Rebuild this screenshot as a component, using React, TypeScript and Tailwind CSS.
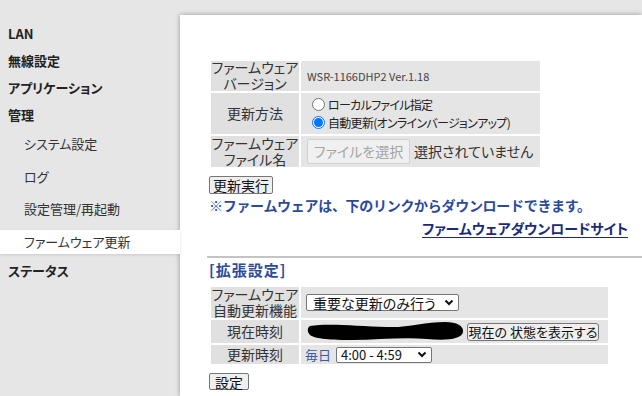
const font = "font-['Noto_Sans_CJK_JP',sans-serif] [font-feature-settings:'palt']";

function Chevron() {
  return (
    <svg width="10" height="7" viewBox="0 0 10 7" className="shrink-0">
      <path d="M1.5 1.5 L5 5 L8.5 1.5" fill="none" stroke="#111" strokeWidth="2" />
    </svg>
  );
}

function Radio({ checked }: { checked?: boolean }) {
  return checked ? (
    <span className="w-[13px] h-[13px] rounded-full border border-[#0075ff] bg-white flex items-center justify-center shrink-0">
      <span className="w-[9px] h-[9px] rounded-full bg-[#0075ff]" />
    </span>
  ) : (
    <span className="w-[13px] h-[13px] rounded-full border border-[#767676] bg-white shrink-0" />
  );
}

function Btn({ children, className = "" }: { children: React.ReactNode; className?: string }) {
  return (
    <div
      className={`flex items-center justify-center whitespace-nowrap bg-[#efefef] border border-[#767676] rounded-[2px] leading-none text-[#111] ${className}`}
    >
      {children}
    </div>
  );
}

function Head({ children }: { children: React.ReactNode }) {
  return (
    <div className="bg-[#e0e0e0] flex flex-col items-center justify-center font-['Liberation_Sans','Noto_Sans_CJK_JP',sans-serif] text-[14px] leading-[16px] text-[#333] text-center">
      {children}
    </div>
  );
}

export default function App() {
  const top = "h-[27px] flex items-center pl-[8px] font-bold text-[13px] text-[#222]";
  const sub = "h-[24px] flex items-center pl-[24px] text-[13px] text-[#333]";

  return (
    <div className={`w-[642px] h-[396px] bg-[#e6e6e6] flex overflow-hidden ${font}`}>
      <nav className="w-[180px] shrink-0 pt-[20px]">
        <div className={top}>LAN</div>
        <div className={top}>無線設定</div>
        <div className={top}>アプリケーション</div>
        <div className={top}>管理</div>
        <div className="flex flex-col gap-[8.5px] mt-[4px]">
          <div className={sub}>システム設定</div>
          <div className={sub}>ログ</div>
          <div className={sub}>設定管理/再起動</div>
          <div className={`${sub} relative z-10 bg-white shadow-[0_1px_3px_rgba(0,0,0,0.12)]`}>
            ファームウェア更新
          </div>
        </div>
        <div className={`${top} mt-[4px]`}>ステータス</div>
      </nav>

      <main className="flex-1 mt-[15px] bg-white shadow-[0_0_5px_rgba(0,0,0,0.35)] pl-[29px] pt-[46px]">
        <div className="ml-[2px] grid grid-cols-[88px_239px] grid-rows-[30px_41px_31px] gap-[2px]">
          <Head>
            <span>ファームウェア</span>
            <span>バージョン</span>
          </Head>
          <div className="bg-[#e5e5e5] flex items-center pl-[6px] text-[11px] text-[#444]">
            WSR-1166DHP2 Ver.1.18
          </div>
          <Head>更新方法</Head>
          <div className="bg-[#e5e5e5] flex flex-col justify-center pl-[11px] text-[12px] tracking-[-0.7px] leading-[18px] text-[#222]">
            <div className="flex items-center gap-[3px]">
              <Radio />
              <span>ローカルファイル指定</span>
            </div>
            <div className="flex items-center gap-[3px]">
              <Radio checked />
              <span>自動更新(オンラインバージョンアップ)</span>
            </div>
          </div>
          <Head>
            <span>ファームウェア</span>
            <span>ファイル名</span>
          </Head>
          <div className="bg-[#e5e5e5] flex items-center pl-[6px] gap-[4px]">
            <div className="w-[103px] h-[25px] flex items-center justify-center bg-[#f0f0f0] border border-[#d2d2d2] rounded-[2px] text-[14px] text-[#a5a5a5]">
              ファイルを選択
            </div>
            <span className="text-[14px] text-[#333]">選択されていません</span>
          </div>
        </div>

        <Btn className="mt-[9px] w-[64px] h-[18px] text-[14px]">更新実行</Btn>

        <div className="mt-[1px] h-[20px] flex items-center text-[14px] tracking-[-0.3px] font-bold text-[#2a4a9c] [font-feature-settings:normal]">
          ※ファームウェアは、下のリンクからダウンロードできます。
        </div>
        <div className="mt-[3px] h-[20px] flex items-center justify-end pr-[14px]">
          <span className="text-[14px] font-bold text-[#1c2a78] underline underline-offset-[3px]">
            ファームウェアダウンロードサイト
          </span>
        </div>

        <div className="mt-[18px] -ml-[2px] border-t-2 border-[#c4c4c4]" />
        <div className="mt-[3px] h-[18px] flex items-center text-[15px] tracking-[1px] font-bold text-[#2d4d9c]">[拡張設定]</div>

        <div className="mt-[8px] ml-[2px] grid grid-cols-[88px_307px] grid-rows-[31px_23px_19px] gap-[2px]">
          <Head>
            <span>ファームウェア</span>
            <span>自動更新機能</span>
          </Head>
          <div className="bg-[#e5e5e5] flex items-center pl-[5px]">
            <div className="w-[153px] h-[17px] flex items-center justify-between pl-[6px] pr-[4px] bg-white border border-[#767676] rounded-[2px] text-[14px] leading-none text-[#111]">
              <span>重要な更新のみ行う</span>
              <Chevron />
            </div>
          </div>
          <Head>現在時刻</Head>
          <div className="bg-[#e5e5e5] flex items-center pl-[6px]">
            <svg width="158" height="21" viewBox="0 0 158 21" className="shrink-0">
              <path
                d="M3 5 C 20 2, 50 5, 80 6 C 100 7, 118 1, 138 1 C 150 1, 157 5, 156 11 C 155 18, 140 20, 120 18 C 95 16, 70 19, 45 19 C 25 19, 8 18, 3 14 C 0 11, 0 7, 3 5 Z"
                fill="#000"
              />
            </svg>
            <Btn className="ml-[2px] w-[132px] h-[18px] rounded-[3px] text-[13px]">現在の 状態を表示する</Btn>
          </div>
          <Head>更新時刻</Head>
          <div className="bg-[#e5e5e5] flex items-center pl-[4px] gap-[5px]">
            <span className="text-[13px] leading-none text-[#3a5ba0]">毎日</span>
            <div className="w-[96px] h-[16px] flex items-center justify-between pl-[4px] pr-[4px] bg-white border border-[#767676] rounded-[2px] text-[13px] leading-none text-[#111]">
              <span>4:00 - 4:59</span>
              <Chevron />
            </div>
          </div>
        </div>

        <Btn className="mt-[9px] w-[40px] h-[17px] text-[14px]">設定</Btn>
      </main>
    </div>
  );
}
